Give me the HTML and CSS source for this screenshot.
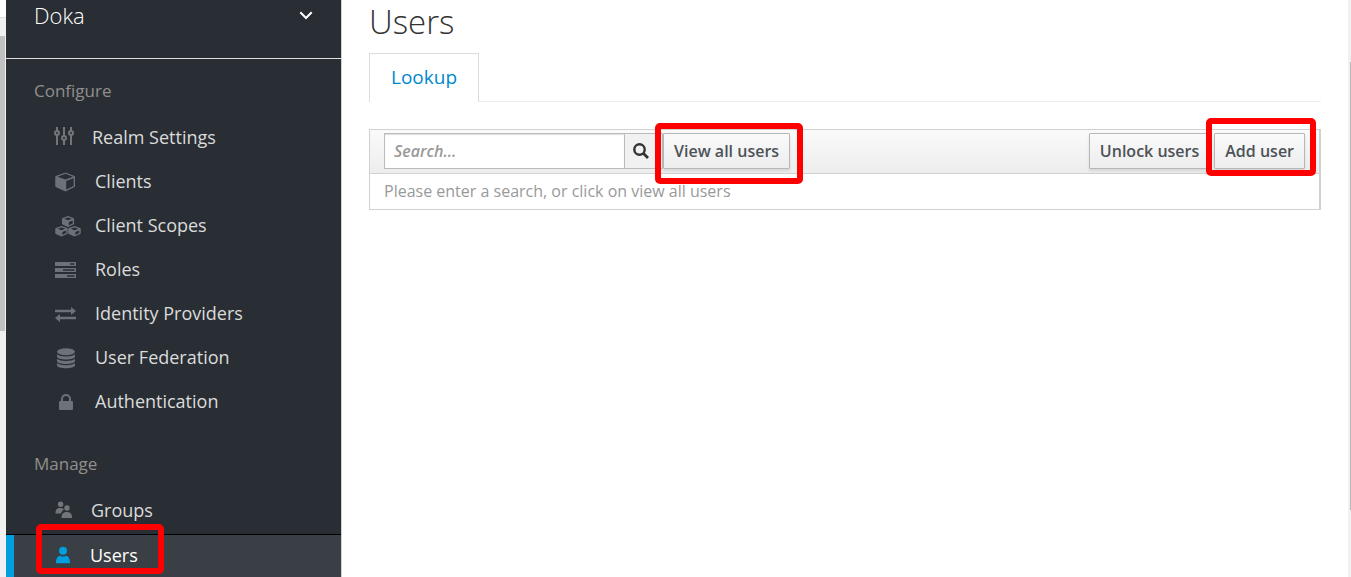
FILE: index.html
```html
<!DOCTYPE html>
<html lang="en">
<head>
<meta charset="utf-8">
<title>Users</title>
<link rel="stylesheet" href="styles.css">
</head>
<body>
<div class="app">
  <div class="outer-scroll">
    <div class="outer-corner"></div>
    <div class="outer-arrow"></div>
    <div class="outer-thumb"></div>
  </div>

  <nav class="sidebar">
    <button class="realm" type="button">
      <span>Doka</span>
      <svg class="chevron" width="14" height="9" viewBox="0 0 14 9"><path d="M1.300 1.300 7 7l5.700-5.700" fill="none" stroke="#fff" stroke-width="2"/></svg>
    </button>

    <h2 class="nav-heading">Configure</h2>
    <ul class="nav-list">
      <li><a class="nav-item" href="#realm-settings">
        <svg class="icon" width="18" height="20" viewBox="0 0 18 20"><g stroke-width="2" stroke="currentColor" fill="none"><path d="M2 0v4M2 8v10M9 0v9M9 13v5M16 0v4M16 8v10"/><circle cx="2" cy="6" r="2"/><circle cx="9" cy="11" r="2"/><circle cx="16" cy="6" r="2"/></g></svg>
        Realm Settings</a></li>
      <li><a class="nav-item" href="#clients">
        <svg class="icon icon-fixed" height="20" viewBox="0 0 21 20"><path d="M10.500 1 19.500 4.500V14.500L10.500 19 .8 14.500V4.500Z" fill="currentColor" stroke="currentColor" stroke-linejoin="round"/><path d="M10.500 1.800 18 4.700 10.500 7.500 2.500 4.700ZM11.200 9 18.600 6.200V14L11.200 17.600Z" fill="#292e34"/></svg>
        Clients</a></li>
      <li><a class="nav-item" href="#client-scopes">
        <svg class="icon icon-fixed" height="22" viewBox="0 0 21 22"><g fill="currentColor" stroke="currentColor" stroke-linejoin="round"><path d="M13 1.500 18.500 3.500V9L13 11.500 7.500 9V3.500Z"/><path d="M6.500 11.500 12.200 13.500V18.500L6.500 21 .8 18.500V13.500ZM19.500 11.500 25.200 13.500V18.500L19.500 21 13.800 18.500V13.500Z"/></g><path d="M13 2.400 16.800 3.800 13 5.300 9.200 3.800ZM13.800 7 17.700 5.400V8.400L13.800 10.200ZM6.500 12.400 10.300 13.800 6.500 15.300 2.700 13.800ZM7.300 17 11.200 15.400V18L7.300 19.800ZM19.500 12.400 23.300 13.800 19.500 15.300 15.700 13.800ZM20.300 17 24.200 15.400V18L20.300 19.800Z" fill="#292e34"/></svg>
        Client Scopes</a></li>
      <li><a class="nav-item" href="#roles">
        <svg class="icon icon-fixed" height="16" viewBox="0 0 21 16"><path d="M0 0h21v4H0zM0 6h21v4H0zM0 12h21v4H0z" fill="currentColor"/><path d="M15 1.300h4.500v1.400H15zM8 7.300h11.500v1.400H8zM12 13.300h7.500v1.400H12z" fill="#292e34"/></svg>
        Roles</a></li>
      <li><a class="nav-item" href="#identity-providers">
        <svg class="icon icon-fixed" height="15" viewBox="0 0 21 15"><path d="M0 2.700h16V0l5 4-5 4V5.300H0zM21 9.700H5V7L0 11l5 4v-2.700h16z" fill="currentColor"/></svg>
        Identity Providers</a></li>
      <li><a class="nav-item" href="#user-federation">
        <svg class="icon icon-fixed" height="21" viewBox="0 0 21 21"><g fill="currentColor"><ellipse cx="11" cy="3.800" rx="9" ry="3.500"/><path d="M2 6.300c3 3 15 3 18 0v2.200c0 4-18 4-18 0zM2 10.700c3 3 15 3 18 0v2.200c0 4-18 4-18 0zM2 15.100c3 3 15 3 18 0v2.200c0 4-18 4-18 0z"/></g></svg>
        User Federation</a></li>
      <li><a class="nav-item" href="#authentication">
        <svg class="icon icon-fixed" height="16" viewBox="0 0 21 16"><rect x="4" y="7" width="14" height="9" rx="1" fill="currentColor"/><path d="M7 8V5a4 4 0 0 1 8 0v3" fill="none" stroke="currentColor" stroke-width="2"/></svg>
        Authentication</a></li>
    </ul>

    <h2 class="nav-heading">Manage</h2>
    <ul class="nav-list">
      <li><a class="nav-item" href="#groups">
        <svg class="icon" width="17" height="18" viewBox="0 0 17 18"><g fill="currentColor"><circle cx="5.600" cy="3.200" r="2.700"/><path d="M.5 12.500C.5 8.500 2 7 5 7c2 0 3 .5 4 1.500-1.500 1-2.500 2-3 4z"/><circle cx="12" cy="7" r="2.700"/><path d="M6.500 17c0-4.500 2-6 5.300-6s5.200 1.500 5.200 6z"/></g></svg>
        Groups</a></li>
      <li><a class="nav-item nav-item-active" href="#users" aria-current="page">
        <svg class="icon" width="16" height="18" viewBox="0 0 16 18"><circle cx="8" cy="4.700" r="4" fill="currentColor"/><path d="M1 17.300c0-5 1.500-7 4-7.600 2 1.200 4 1.200 6 0 2.500.6 4 2.600 4 7.600z" fill="currentColor"/></svg>
        Users
        <span class="mark mark-nav"></span></a></li>
    </ul>
  </nav>

  <main class="content">
    <h1 class="title">Users</h1>
    <div class="tabs"><a class="tab" href="#lookup">Lookup</a></div>

    <section class="panel">
      <form class="toolbar">
        <div class="search">
          <input class="search-input" type="text" placeholder="Search..." aria-label="Search">
          <button class="search-button" type="button" aria-label="Search">
            <svg width="16" height="16" viewBox="0 0 16 16"><circle cx="6.500" cy="6.500" r="5.200" fill="none" stroke="#333" stroke-width="2.400"/><path d="M10.300 10.300 15 15" stroke="#333" stroke-width="2.800"/></svg>
          </button>
        </div>
        <div class="marked">
          <button class="button" type="button">View all users</button>
          <span class="mark"></span>
        </div>
        <div class="actions">
          <button class="button" type="button">Unlock users</button>
          <div class="marked">
            <button class="button" type="button">Add user</button>
            <span class="mark mark-add"></span>
          </div>
        </div>
      </form>
      <p class="message">Please enter a search, or click on view all users</p>
    </section>
  </main>

  <div class="page-scroll"><div class="page-thumb"></div></div>
</div>
</body>
</html>
```
FILE: styles.css
```css
* {
  box-sizing: border-box;
}

body {
  margin: 0;
  font-family: "Open Sans", "Noto Sans", sans-serif;
  background: #fff;
  color: #333;
}

button,
input {
  font-family: inherit;
}

.app {
  display: flex;
  height: 100vh;
  overflow: hidden;
}

/* Scroll tracks on both sides of the page */
.outer-scroll {
  flex: 0 0 6px;
  display: flex;
  flex-direction: column;
  background: #f0f0f0;
}

.outer-corner {
  height: 18px;
  background: #fff;
  border-bottom: 1px solid #ddd;
}

.outer-arrow {
  height: 18px;
}

.outer-thumb {
  width: 5px;
  height: 295px;
  background: #c1c1c1;
}

.page-scroll {
  flex: 0 0 3px;
  padding: 62px 0 0 2px;
  background: #f0f0f0;
}

.page-thumb {
  height: 448px;
  background: #b8b8b8;
}

/* Sidebar */
.sidebar {
  flex: 0 0 336px;
  background: #292e34;
  border-right: 1px solid #d1d1d1;
}

.realm {
  display: flex;
  justify-content: space-between;
  align-items: flex-start;
  width: 100%;
  height: 59px;
  padding: 0 28px;
  border: 0;
  border-bottom: 1px solid #e0e0e0;
  background: none;
  color: #fff;
  font-size: 22px;
  font-weight: 300;
  line-height: 31px;
}

.chevron {
  margin-top: 11px;
}

.nav-heading {
  margin: 0;
  padding: 20px 28px 12px;
  color: #918f8c;
  font-size: 17px;
  font-weight: 400;
  line-height: 24px;
}

.nav-list {
  margin: 0 0 9px;
  padding: 0;
  list-style: none;
}

.nav-item {
  position: relative;
  display: flex;
  align-items: center;
  gap: 19px;
  height: 44px;
  padding-left: 49px;
  color: #dbdbdb;
  font-size: 18px;
  text-decoration: none;
}

.nav-item-active {
  margin-top: 2px;
  padding-bottom: 4px;
  border-top: 1px solid #000;
  background: linear-gradient(90deg, #00a0e0 8px, #393f44 8px);
  color: #fff;
}

.icon {
  flex: none;
  overflow: visible;
  color: #72767b;
}

.icon-fixed {
  width: 21px;
  margin-top: 2px;
  color: #6c717a;
}

.nav-item-active .icon {
  color: #00a0e0;
}

/* Main content */
.content {
  flex: 1;
  min-width: 0;
  padding: 0 27px;
}

.title {
  margin: 0;
  font-size: 33px;
  font-weight: 300;
  line-height: 44px;
}

.tabs {
  display: flex;
  height: 49px;
  margin-top: 9px;
  border-bottom: 1px solid #ededed;
}

.tab {
  height: 49px;
  padding: 0 21px;
  border: 1px solid #dcdcdc;
  border-bottom: 0;
  background: #fff;
  color: #0088ce;
  font-size: 19px;
  line-height: 46px;
  text-decoration: none;
}

.panel {
  margin-top: 27px;
  border: 1px solid #d1d1d1;
  border-right-width: 2px;
}

.toolbar {
  display: flex;
  align-items: center;
  height: 44px;
  padding: 0 14px 2px;
  border-bottom: 1px solid #d1d1d1;
  background: linear-gradient(#fafafa, #ededed);
}

.search {
  display: flex;
  height: 36px;
  border: 1px solid #bbb;
  background: #f5f5f5;
}

.search-input {
  width: 240px;
  padding: 0 9px;
  border: 0;
  border-right: 1px solid #bbb;
  background: #fff;
  box-shadow: inset 0 1px 1px #dedede;
  font-size: 16px;
}

.search-input::placeholder {
  color: #999;
  font-style: italic;
  font-weight: 600;
}

.search-button {
  display: flex;
  align-items: center;
  width: 37px;
  padding: 0 0 0 8px;
  border: 0;
  background: #f1f1f1;
}

.button {
  height: 36px;
  padding: 0 10px;
  border: 1px solid #b7b7b7;
  border-radius: 1px;
  background: linear-gradient(#fafafa, #ededed);
  box-shadow: 0 2px 3px rgba(3, 3, 3, 0.1);
  color: #4d5258;
  font-size: 16px;
  font-weight: 600;
}

.actions {
  display: flex;
  gap: 4px;
  margin-left: auto;
}

.message {
  margin: 0;
  padding: 0 14px;
  color: #999;
  font-size: 16px;
  line-height: 35px;
}

/* Red highlight frames laid over controls */
.marked {
  position: relative;
}

.mark {
  position: absolute;
  inset: -10px -13px -15px -8px;
  border: 6px solid #f00;
  border-radius: 5px;
  pointer-events: none;
}

.mark-add {
  inset: -15px -11px -7px -8px;
}

.mark-nav {
  inset: -11px auto auto 30px;
  width: 128px;
  height: 50px;
}
```
